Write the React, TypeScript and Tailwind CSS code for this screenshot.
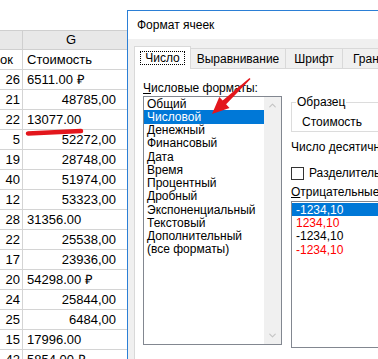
import { ChevronUp, ChevronDown } from 'lucide-react';

const sheetRows: [string, string, 'l' | 'r'][] = [
  ['26', '6511.00 ₽', 'l'],
  ['21', '48785,00', 'r'],
  ['22', '13077.00', 'l'],
  ['5', '52272,00', 'r'],
  ['19', '28748,00', 'r'],
  ['40', '51974,00', 'r'],
  ['12', '53323,00', 'r'],
  ['28', '31356.00', 'l'],
  ['22', '25538,00', 'r'],
  ['17', '23936,00', 'r'],
  ['20', '54298.00 ₽', 'l'],
  ['24', '25844,00', 'r'],
  ['25', '6484,00', 'r'],
  ['15', '17996.00', 'l'],
  ['42', '5854.00 ₽', 'l'],
];

const formats = [
  'Общий',
  'Числовой',
  'Денежный',
  'Финансовый',
  'Дата',
  'Время',
  'Процентный',
  'Дробный',
  'Экспоненциальный',
  'Текстовый',
  'Дополнительный',
  '(все форматы)',
];

const negatives = [
  { text: '-1234,10', cls: 'bg-[#0078d7] text-white' },
  { text: '1234,10', cls: 'text-[#ff0000]' },
  { text: '-1234,10', cls: 'text-black' },
  { text: '-1234,10', cls: 'text-[#ff0000]' },
];

function Sheet() {
  return (
    <div className="flex flex-col font-['Liberation_Sans',Arial,sans-serif] text-[13px] text-black">
      <div className="h-[30px] bg-white" />
      <div className="flex h-[20px] border-y border-[#cfcfcf] bg-[#e8e8e8]">
        <div className="w-[23px] border-r border-[#cfcfcf]" />
        <div className="flex w-[96px] items-center justify-center">G</div>
      </div>
      {[['ок', 'Стоимость', 'l'] as [string, string, 'l' | 'r'], ...sheetRows].map(([a, g, align], i) => (
        <div key={i} className="flex h-[20px] shrink-0 border-b border-[#d4d4d4]">
          <div className={`flex w-[23px] items-center border-r border-[#d4d4d4] ${i === 0 ? 'justify-start' : 'justify-end pr-[2px]'}`}>{a}</div>
          <div className={`flex w-[104px] items-center ${align === 'l' ? 'justify-start pl-[4px]' : 'justify-end pr-[11px]'}`}>{g}</div>
        </div>
      ))}
    </div>
  );
}

function Dialog() {
  return (
    <div className="absolute left-[127px] top-[10px] flex h-[400px] w-[300px] flex-col border-l border-t border-[#2b7fd6] font-['Liberation_Sans',Arial,sans-serif] text-[12px] text-black">
      <div className="flex h-[28px] items-center bg-white pl-[9px]">Формат ячеек</div>
      <div className="flex flex-1 flex-col bg-[#f0f0f0] pl-[6px] pt-[7px]">
        <div className="flex items-end">
          <div className="relative z-10 -mb-px flex h-[23px] w-[57px] items-center justify-center border-x border-t border-[#d9d9d9] bg-white">
            <span className="border border-dotted border-black px-[4px] leading-[12px]">Число</span>
          </div>
          <div className="flex h-[20px] w-[95px] items-center justify-center border-r border-t border-[#d9d9d9]">Выравнивание</div>
          <div className="flex h-[20px] w-[57px] items-center justify-center border-r border-t border-[#d9d9d9]">Шрифт</div>
          <div className="flex h-[20px] w-[70px] items-center border-r border-t border-[#d9d9d9] pl-[10px]">Граница</div>
        </div>
        <div className="flex flex-1 border-l border-t border-[#d9d9d9] bg-white pl-[8px]">
          <div className="flex flex-col pt-[12px]">
            <div className="leading-[14px]">
              <span className="underline">Ч</span>исловые форматы:
            </div>
            <div className="mt-px flex h-[249px] w-[139px] border border-[#828790]">
              <div className="flex flex-1 flex-col">
                {formats.map((f, i) => (
                  <div
                    key={f}
                    className={`flex h-[13.25px] items-center pl-[3px] ${i === 1 ? 'bg-[#0078d7] text-white' : ''}`}
                  >
                    {f}
                  </div>
                ))}
              </div>
              <div className="flex w-[17px] flex-col items-center justify-between bg-[#f0f0f0] py-[3px]">
                <ChevronUp size={11} strokeWidth={2.5} className="text-[#c4c4c4]" />
                <ChevronDown size={11} strokeWidth={2.5} className="text-[#c4c4c4]" />
              </div>
            </div>
          </div>
          <div className="ml-[9px] flex w-[120px] flex-col whitespace-nowrap pt-[26px]">
            <fieldset className="h-[37px] border border-[#dcdcdc]">
              <legend className="ml-[4px] px-[1px] leading-[14px]">Образец</legend>
              <div className="pl-[10px] pt-[6px] leading-[14px]">Стоимость</div>
            </fieldset>
            <div className="mt-[8px] leading-[14px]">Число десятичных знаков:</div>
            <div className="mt-[12px] flex items-center gap-[5px]">
              <div className="h-[13px] w-[13px] shrink-0 border border-[#333333] bg-white" />
              <span className="leading-[14px]">
                Разделитель <span className="underline">г</span>рупп разрядов
              </span>
            </div>
            <div className="mt-[5px] leading-[14px]">
              <span className="underline">О</span>трицательные числа:
            </div>
            <div className="mt-[2px] flex h-[147px] flex-col border border-[#828790] pt-[1px]">
              {negatives.map((n, i) => (
                <div key={i} className={`flex h-[13.3px] items-center pl-[4px] ${n.cls}`}>
                  {n.text}
                </div>
              ))}
            </div>
          </div>
        </div>
      </div>
    </div>
  );
}

export default function App() {
  return (
    <div className="relative h-[359px] w-[378px] overflow-hidden bg-white">
      <Sheet />
      <Dialog />
      <svg className="pointer-events-none absolute inset-0" width="378" height="359" viewBox="0 0 378 359">
        <path d="M28 133.5 L81 131" stroke="#e3161c" strokeWidth="4.5" strokeLinecap="round" fill="none" />
        <polygon
          points="249.5,78 250.5,79 226.1,104.2 229.5,107.9 212,114 219.3,96.9 222.7,100.6"
          fill="#e3161c"
        />
      </svg>
    </div>
  );
}
